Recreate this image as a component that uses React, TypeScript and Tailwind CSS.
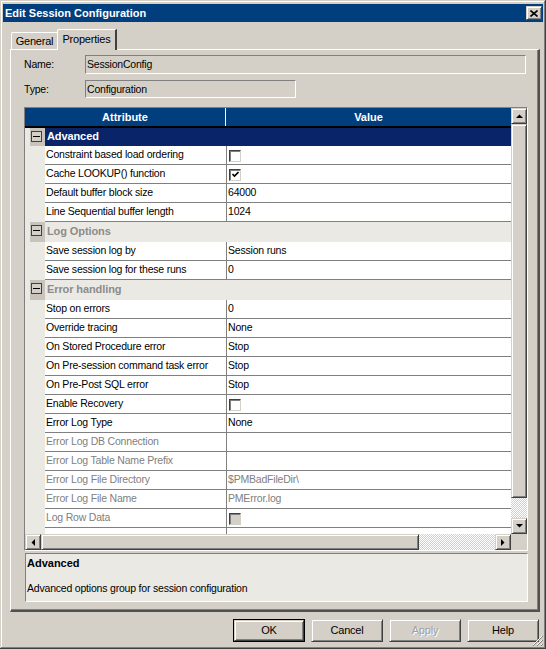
import React from "react"

type Row = {
    label: string
    group?: boolean
    selected?: boolean
    value?: string
    check?: boolean
    checked?: boolean
    disabled?: boolean
}

const ROWS: Row[] = [
    { label: "Advanced", group: true, selected: true },
    { label: "Constraint based load ordering", check: true },
    { label: "Cache LOOKUP() function", check: true, checked: true },
    { label: "Default buffer block size", value: "64000" },
    { label: "Line Sequential buffer length", value: "1024" },
    { label: "Log Options", group: true },
    { label: "Save session log by", value: "Session runs" },
    { label: "Save session log for these runs", value: "0" },
    { label: "Error handling", group: true },
    { label: "Stop on errors", value: "0" },
    { label: "Override tracing", value: "None" },
    { label: "On Stored Procedure error", value: "Stop" },
    { label: "On Pre-session command task error", value: "Stop" },
    { label: "On Pre-Post SQL error", value: "Stop" },
    { label: "Enable Recovery", check: true },
    { label: "Error Log Type", value: "None" },
    { label: "Error Log DB Connection", disabled: true },
    { label: "Error Log Table Name Prefix", disabled: true },
    { label: "Error Log File Directory", value: "$PMBadFileDir\\", disabled: true },
    { label: "Error Log File Name", value: "PMError.log", disabled: true },
    { label: "Log Row Data", check: true, disabled: true },
    { label: "" },
]

const raised =
    "border border-t-[#d4d0c8] border-l-[#d4d0c8] border-r-[#404040] border-b-[#404040] shadow-[inset_1px_1px_#fff,inset_-1px_-1px_#808080] bg-[#d4d0c8]"
const checker =
    "bg-[repeating-conic-gradient(#ffffff_0_25%,#d4d0c8_0_50%)] bg-[length:2px_2px]"

function Arrow({ dir }: { dir: "up" | "down" | "left" | "right" }) {
    const pts = {
        up: "0,4 7,4 3.5,0.5",
        down: "0,0 7,0 3.5,3.5",
        left: "4,0 4,7 0.5,3.5",
        right: "0,0 0,7 3.5,3.5",
    }[dir]
    const vert = dir === "up" || dir === "down"
    return (
        <svg width={vert ? 7 : 4} height={vert ? 4 : 7} viewBox={vert ? "0 0 7 4" : "0 0 4 7"}>
            <polygon points={pts} fill="#000" />
        </svg>
    )
}

function CheckBox({ checked, disabled }: { checked?: boolean; disabled?: boolean }) {
    return (
        <div
            className={`w-[12px] h-[12px] border border-t-[#404040] border-l-[#404040] border-r-[#d4d0c8] border-b-[#d4d0c8] shadow-[inset_1px_1px_#808080] flex items-center justify-center ${
                disabled ? "bg-[#d4d0c8]" : "bg-white"
            }`}
        >
            {checked && (
                <svg width="7" height="7" viewBox="0 0 7 7">
                    <polyline points="0.5,3 2.5,5 6.5,1" fill="none" stroke="#000" strokeWidth="1.6" />
                </svg>
            )}
        </div>
    )
}

function MinusBox() {
    return (
        <div className="w-[11px] h-[11px] border border-[#404040] bg-[#d4d0c8] flex items-center justify-center">
            <div className="w-[7px] h-[1px] bg-black" />
        </div>
    )
}

function GridRow({ row }: { row: Row }) {
    if (row.group) {
        return (
            <div className={`flex shrink-0 ${row.selected ? "h-[18px]" : "h-[20px]"}`}>
                <div className="w-[20px] bg-[#ebe9e3] flex">
                    <div className="ml-[5px] w-[15px] bg-[#c8c4bc] pt-[3px] pl-[1px]">
                        <MinusBox />
                    </div>
                </div>
                <div
                    className={`flex-1 flex items-center pl-[2px] pb-[1px] font-bold text-[11px] tracking-[-0.1px] ${
                        row.selected ? "bg-[#0a246a] text-white" : "bg-[#ebe9e3] text-[#8c8c8c]"
                    }`}
                >
                    {row.label}
                </div>
            </div>
        )
    }
    const txt = row.disabled ? "text-[#808080]" : "text-black"
    return (
        <div className="flex h-[19px] shrink-0">
            <div className="w-[20px] bg-[#ebe9e3]" />
            <div className={`w-[181px] bg-white border-b border-[#808080] pl-[1px] pb-[1px] flex items-center ${txt}`}>
                {row.label}
            </div>
            <div className={`flex-1 bg-white border-b border-l border-[#808080] pl-[1px] pb-[1px] flex items-center ${txt}`}>
                {row.check ? (
                    <div className="pl-[1px] pt-[2px]">
                        <CheckBox checked={row.checked} disabled={row.disabled} />
                    </div>
                ) : (
                    row.value
                )}
            </div>
        </div>
    )
}

function Button({ label, primary, disabled }: { label: string; primary?: boolean; disabled?: boolean }) {
    return (
        <div className={`w-[72px] h-[23px] ${primary ? "border border-black" : ""}`}>
            <div
                className={`w-full h-full flex items-center justify-center ${raised} ${
                    disabled ? "text-[#a0a0a0] [text-shadow:1px_1px_#fff]" : "text-black"
                }`}
            >
                {label}
            </div>
        </div>
    )
}

export default function App() {
    return (
        <div className="w-[546px] h-[649px] bg-[#d4d0c8] relative overflow-hidden font-['Liberation_Sans',Arial,sans-serif] text-[10.5px] tracking-[-0.2px] leading-none shadow-[inset_-1px_-1px_#404040,inset_1px_1px_#d4d0c8,inset_-2px_-2px_#808080,inset_2px_2px_#fff] pt-[4px] px-[3px]">
            {/* Title bar */}
            <div className="h-[18px] bg-[#013e7e] flex items-center justify-between pl-[2px] pr-[1px]">
                <span className="text-white font-bold text-[11px] tracking-normal">Edit Session Configuration</span>
                <div className={`w-[16px] h-[14px] flex items-center justify-center ${raised}`}>
                    <svg width="8" height="7" viewBox="0 0 8 7">
                        <path d="M0.5 0.5 L7.5 6.5 M7.5 0.5 L0.5 6.5" stroke="#000" strokeWidth="1.6" />
                    </svg>
                </div>
            </div>

            {/* Tabs */}
            <div className="flex items-end h-[20px] mt-[7px] ml-[8px] text-[11px]">
                <div className="w-[46px] h-[17px] bg-[#d4d0c8] border-t border-l border-white rounded-tl-[2px] flex items-center justify-center pt-[1px]">
                    General
                </div>
                <div className="w-[60px] h-[21px] bg-[#d4d0c8] border-t border-l border-white border-r-2 border-r-[#404040] rounded-tl-[2px] flex items-center justify-center pb-[2px] -mb-[1px] relative z-10">
                    Properties
                </div>
            </div>

            {/* Panel */}
            <div className="ml-[7px] w-[530px] h-[563px] border-t border-l border-white border-r-2 border-b-2 border-r-[#505050] border-b-[#505050] shadow-[inset_-1px_-1px_#808080] pt-[5px] pl-[13px]">
                <div className="flex items-center h-[19px]">
                    <div className="w-[61px]">Name:</div>
                    <div className="w-[441px] h-[19px] border border-t-[#808080] border-l-[#808080] border-r-white border-b-white flex items-center pl-[1px]">
                        SessionConfig
                    </div>
                </div>
                <div className="flex items-center h-[18px] mt-[6px]">
                    <div className="w-[61px]">Type:</div>
                    <div className="w-[211px] h-[18px] border border-t-[#808080] border-l-[#808080] border-r-white border-b-white flex items-center pl-[1px]">
                        Configuration
                    </div>
                </div>

                {/* Property grid */}
                <div className="mt-[9px] w-[504px] h-[444px] border border-t-[#808080] border-l-[#808080] border-r-white border-b-white flex">
                    <div className="w-[486px] flex flex-col">
                        <div className="h-[18px] shrink-0 flex bg-[#013e7e] text-white font-bold text-[11px] tracking-normal">
                            <div className="w-[201px] border-r border-white flex items-center justify-center">Attribute</div>
                            <div className="flex-1 flex items-center justify-center">Value</div>
                        </div>
                        <div className="h-[2px] shrink-0 bg-black" />
                        <div className="flex-1 min-h-0 overflow-hidden flex flex-col bg-[#ebe9e3]">
                            {ROWS.map((r, i) => (
                                <GridRow key={i} row={r} />
                            ))}
                        </div>
                        <div className="h-[16px] shrink-0 flex">
                            <div className={`w-[16px] flex items-center justify-center ${raised}`}>
                                <Arrow dir="left" />
                            </div>
                            <div className={`w-[378px] ${raised}`} />
                            <div className={`flex-1 ${checker}`} />
                            <div className={`w-[16px] flex items-center justify-center ${raised}`}>
                                <Arrow dir="right" />
                            </div>
                        </div>
                    </div>
                    <div className="w-[16px] flex flex-col">
                        <div className={`h-[16px] shrink-0 flex items-center justify-center ${raised}`}>
                            <Arrow dir="up" />
                        </div>
                        <div className={`h-[374px] shrink-0 ${raised}`} />
                        <div className={`flex-1 ${checker}`} />
                        <div className={`h-[16px] shrink-0 flex items-center justify-center ${raised}`}>
                            <Arrow dir="down" />
                        </div>
                        <div className="h-[16px] shrink-0 bg-[#d4d0c8]" />
                    </div>
                </div>

                {/* Description */}
                <div className="mt-[2px] ml-[1px] w-[503px] h-[49px] bg-[#ebe9e3] border border-t-[#808080] border-l-[#808080] border-r-white border-b-white pl-[1px] pt-[4px]">
                    <div className="font-bold text-[11px] tracking-normal">Advanced</div>
                    <div className="mt-[14px]">Advanced options group for session configuration</div>
                </div>
            </div>

            {/* Buttons */}
            <div className="flex justify-end gap-[6px] mt-[7px] pr-[4px] text-[11px]">
                <Button label="OK" primary />
                <Button label="Cancel" />
                <Button label="Apply" disabled />
                <Button label="Help" />
            </div>

            {/* size grip */}
            <svg className="absolute right-[3px] bottom-[3px]" width="11" height="11" viewBox="0 0 11 11">
                <path d="M10 1 L1 10 M10 5 L5 10 M10 9 L9 10" stroke="#fff" strokeWidth="1" />
                <path d="M11 1 L1 11 M11 5 L5 11 M11 9 L9 11" stroke="#808080" strokeWidth="1" />
            </svg>
        </div>
    )
}
